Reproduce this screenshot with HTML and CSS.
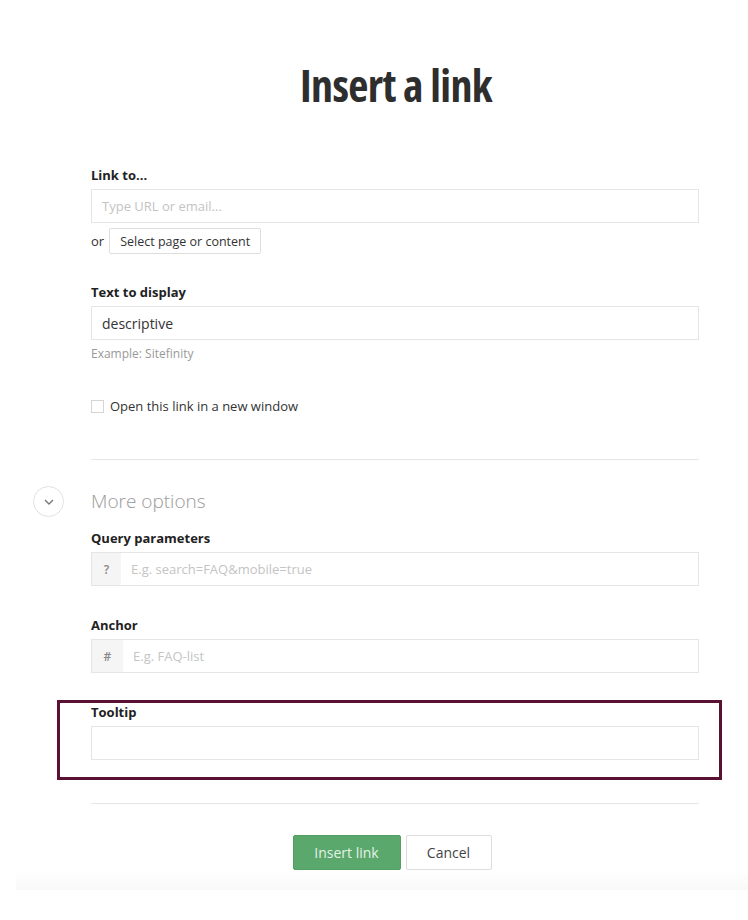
FILE: index.html
```html
<!DOCTYPE html>
<html>
<head>
<meta charset="utf-8">
<link rel="stylesheet" href="styles.css">
</head>
<body>
<div class="dialog">
  <h1 class="title">Insert a link</h1>
  <div class="form">
    <div class="field field-link">
      <label class="label">Link to...</label>
      <div class="input"><span class="placeholder">Type URL or email...</span></div>
      <div class="or-row"><span class="or">or</span><button class="btn-select">Select page or content</button></div>
    </div>
    <div class="field field-text">
      <label class="label">Text to display</label>
      <div class="input"><span class="value">descriptive</span></div>
      <div class="hint">Example: Sitefinity</div>
    </div>
    <div class="check-row"><span class="checkbox"></span><span class="check-text">Open this link in a new window</span></div>
    <hr class="sep sep-top">
    <div class="more">
      <span class="more-toggle"><svg width="12" height="8" viewBox="0 0 12 8"><path d="M2 2 L6 6 L10 2" fill="none" stroke="#777" stroke-width="1.4"/></svg></span>
      <span class="more-text">More options</span>
    </div>
    <div class="field field-query">
      <label class="label">Query parameters</label>
      <div class="input prefixed"><span class="prefix">?</span><span class="placeholder">E.g. search=FAQ&amp;mobile=true</span></div>
    </div>
    <div class="field field-anchor">
      <label class="label">Anchor</label>
      <div class="input prefixed"><span class="prefix prefix-hash">#</span><span class="placeholder">E.g. FAQ-list</span></div>
    </div>
    <div class="field field-tooltip">
      <label class="label">Tooltip</label>
      <div class="input"></div>
    </div>
    <hr class="sep sep-bottom">
    <div class="actions">
      <button class="btn-primary">Insert link</button>
      <button class="btn-cancel">Cancel</button>
    </div>
  </div>
  <div class="footer-strip"></div>
</div>
</body>
</html>
```
FILE: styles.css
```css
* { box-sizing: border-box; }
html, body { margin: 0; padding: 0; background: #fff; }
body { font-family: "Open Sans", "Noto Sans", sans-serif; color: #333; width: 748px; height: 920px; overflow: hidden; }

.dialog { padding-top: 56px; }
.title {
  margin: 0;
  text-align: center;
  font-family: "Open Sans", sans-serif;
  font-stretch: 75%;
  font-weight: 700;
  font-size: 44px;
  line-height: 58px;
  color: #2e2e2e;
  padding-left: 44px;
  letter-spacing: -0.6px;
}

.form { margin-left: 91px; width: 608px; }

.field { display: flex; flex-direction: column; }
.label { font-size: 13px; font-weight: 700; line-height: 18px; color: #222; margin-bottom: 5px; }
.input {
  height: 34px;
  border: 1px solid #e5e5e5;
  display: flex;
  align-items: center;
  padding-left: 10px;
  font-size: 13px;
  background: #fff;
}
.placeholder { color: #c4c4c4; font-size: 13px; }
.value { color: #333; font-size: 14px; }

.field-link { margin-top: 52px; }
.or-row { display: flex; align-items: center; margin-top: 5px; gap: 5px; }
.or { font-size: 13px; color: #333; }
.btn-select {
  font-family: inherit;
  font-size: 12.5px;
  color: #333;
  background: #fff;
  border: 1px solid #ddd;
  border-radius: 2px;
  height: 26px;
  padding: 0 10px;
}

.field-text { margin-top: 29px; }
.hint { font-size: 12px; color: #999; line-height: 16px; margin-top: 6px; }

.check-row { display: flex; align-items: center; gap: 6px; margin-top: 35px; }
.checkbox { width: 13px; height: 13px; border: 1px solid #d4d4d4; background: #fff; display: inline-block; }
.check-text { font-size: 13px; color: #333; line-height: 18px; }

.sep { border: 0; border-top: 1px solid #e6e6e6; margin: 0; }
.sep-top { margin-top: 44px; }

.more { position: relative; display: flex; align-items: center; margin-top: 27px; height: 28px; }
.more-toggle {
  position: absolute;
  left: -58px;
  top: -1px;
  width: 31px;
  height: 31px;
  border: 1px solid #e2e2e2;
  border-radius: 50%;
  display: flex;
  align-items: center;
  justify-content: center;
}
.more-text { font-size: 19px; font-weight: 300; color: #9a9a9a; }

.field-query { margin-top: 14px; }
.prefixed { padding-left: 0; }
.prefix {
  width: 29px;
  height: 100%;
  background: #f5f5f5;
  color: #888;
  font-size: 12px;
  font-weight: 600;
  display: flex;
  align-items: center;
  justify-content: center;
  margin-right: 10px;
}
.prefix-hash { width: 31px; }

.field-anchor { margin-top: 30px; }

.field-tooltip { margin-top: 30px; position: relative; }
.field-tooltip::before {
  content: "";
  position: absolute;
  left: -34px;
  right: -23px;
  top: -3px;
  bottom: -20px;
  border: 3px solid #5b1132;
  pointer-events: none;
}

.sep-bottom { margin-top: 43px; }

.actions { display: flex; justify-content: center; gap: 5px; margin-top: 31px; padding-right: 6px; }
.btn-primary {
  font-family: inherit;
  font-size: 14px;
  color: #e4f2e7;
  background: #5aa86c;
  border: 1px solid #529e63;
  border-radius: 2px;
  height: 35px;
  width: 108px;
}
.btn-cancel {
  font-family: inherit;
  font-size: 14px;
  color: #444;
  background: #fff;
  border: 1px solid #ddd;
  border-radius: 2px;
  height: 35px;
  width: 86px;
}

.footer-strip {
  margin-left: 16px;
  height: 20px;
  background: linear-gradient(#fff, #f8f8f8);
}
```
